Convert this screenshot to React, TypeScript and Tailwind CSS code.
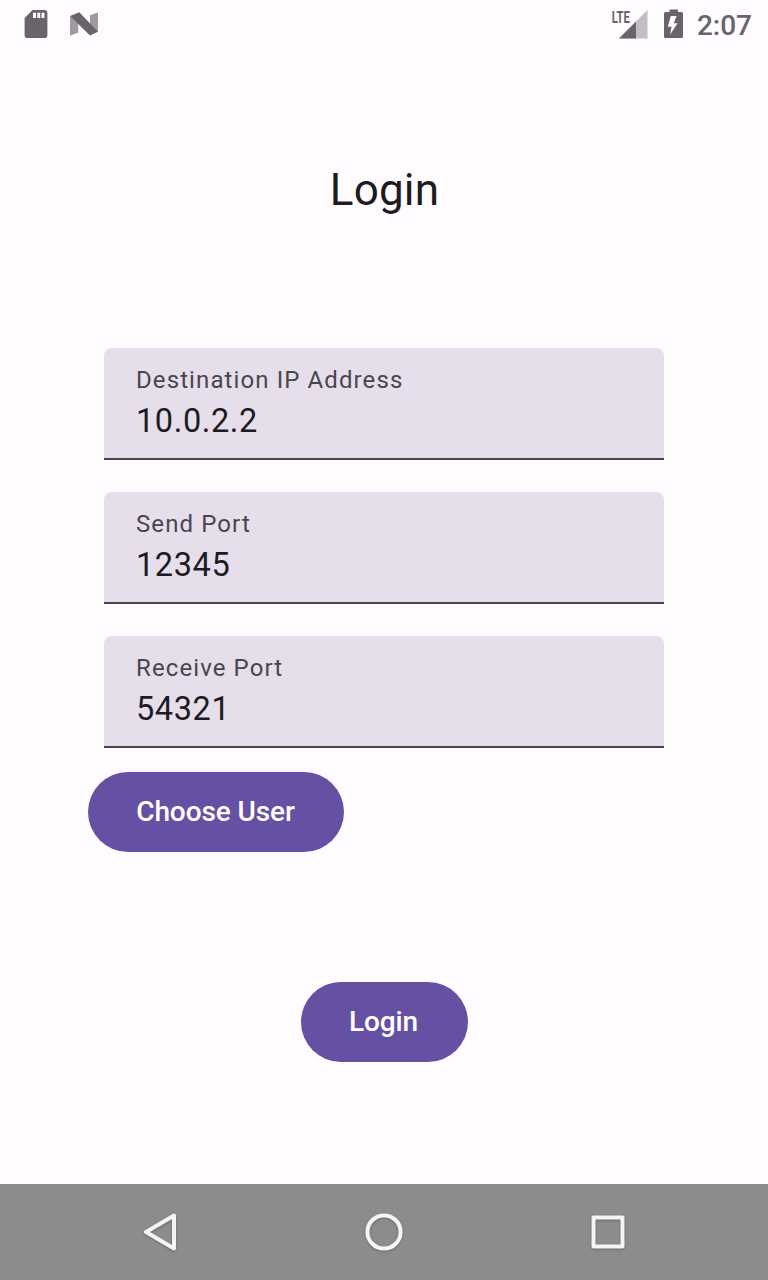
type FieldProps = { label: string; value: string };

function Field({ label, value }: FieldProps) {
  return (
    <div className="flex h-28 w-[560px] flex-col rounded-t-lg border-b-2 border-[#49454f] bg-[#e6dfeb] px-8 pt-4">
      <span className="h-8 text-2xl leading-8 tracking-[1.1px] text-[#49454f]">{label}</span>
      <span className="h-12 text-[32.5px] leading-[50px] tracking-[0.6px] text-[#1c1b1f]">{value}</span>
    </div>
  );
}

function StatusBar() {
  return (
    <header className="flex h-12 items-center justify-between pr-4 pl-6 text-[#676569]">
      <div className="flex h-12 items-start">
        <svg className="h-12 w-6" viewBox="0 0 24 48" fill="currentColor">
          <path
            fillRule="evenodd"
            d="M8.6 10H20.6Q23.4 10 23.4 12.8V35.2Q23.4 38 20.6 38H3.4Q.6 38 .6 35.2V18ZM9 12.8V18H12V12.8ZM13.3 12.8V18H16.2V12.8ZM17.5 12.8V18H20.4V12.8Z"
          />
        </svg>
        <svg className="ml-[21px] h-12 w-[30px]" viewBox="69 0 30 48">
          <path fill="#9d9b9e" d="M70 15.8L78.3 23V32.4L70 35.7ZM98 12.4V32L90 26V15.3Z" />
          <path fill="#676569" d="M70 16L79.3 12.2L98 31.8L90 35.6Z" />
        </svg>
      </div>
      <div className="flex h-12 items-center">
        <svg className="h-12 w-[38px]" viewBox="610 0 38 48">
          <path fill="#c1bfc3" d="M647.5 10V38.5H619Z" />
          <path fill="#676569" d="M636 21.5V38.5H619Z" />
          <text
            x="611.7"
            y="22.7"
            textLength="18.2"
            lengthAdjust="spacingAndGlyphs"
            fill="#676569"
            fontSize="17"
            fontWeight="700"
          >
            LTE
          </text>
        </svg>
        <svg className="ml-4 h-12 w-5" viewBox="664 0 20 48" fill="currentColor">
          <path
            fillRule="evenodd"
            d="M669.5 9.5H678V12H681.5Q683 12 683 13.5V36.5Q683 38 681.5 38H665.5Q664 38 664 36.5V13.5Q664 12 665.5 12H669.5ZM670.8 16L667.8 26.7H671.6L670 34.7L677.6 23.2H673.8L676.6 16Z"
          />
        </svg>
        <span className="ml-[13px] pt-1 text-[28px] leading-8 font-medium">2:07</span>
      </div>
    </header>
  );
}

function NavigationBar() {
  return (
    <nav className="flex h-24 items-center justify-center gap-44 bg-[#8d8b8c]">
      {["back", "home", "recent"].map((kind) => (
        <svg
          key={kind}
          className="h-12 w-12 drop-shadow-[0_1px_1px_rgba(0,0,0,0.25)]"
          viewBox="0 0 48 48"
          fill="none"
          stroke="#f5f5f5"
          strokeWidth="4"
          strokeLinejoin="round"
        >
          {kind === "back" && <path d="M10 24L38 7.5V40.5Z" />}
          {kind === "home" && <circle cx="24" cy="24" r="16.6" />}
          {kind === "recent" && <rect x="9.5" y="9.5" width="29" height="29" />}
        </svg>
      ))}
    </nav>
  );
}

export default function App() {
  return (
    <div className="flex h-[1280px] w-[768px] flex-col overflow-hidden bg-[#fffbfe] font-['Roboto',sans-serif]">
      <StatusBar />
      <main className="flex flex-1 flex-col items-center">
        <h1 className="mt-[114px] pl-px text-[44px] leading-[56px] tracking-[0.2px] text-[#1c1b1f]">Login</h1>
        <section className="mt-[130px] flex flex-col gap-8">
          <Field label="Destination IP Address" value="10.0.2.2" />
          <Field label="Send Port" value="12345" />
          <Field label="Receive Port" value="54321" />
        </section>
        <button className="mt-6 ml-[88px] h-20 w-64 self-start rounded-full bg-[#6650a4] pr-px text-[28px] font-medium tracking-[-0.1px] text-white">
          Choose User
        </button>
        <button className="mt-[130px] h-20 w-[167px] rounded-full bg-[#6650a4] pr-px text-[28px] font-medium tracking-[-0.1px] text-white">
          Login
        </button>
      </main>
      <NavigationBar />
    </div>
  );
}
